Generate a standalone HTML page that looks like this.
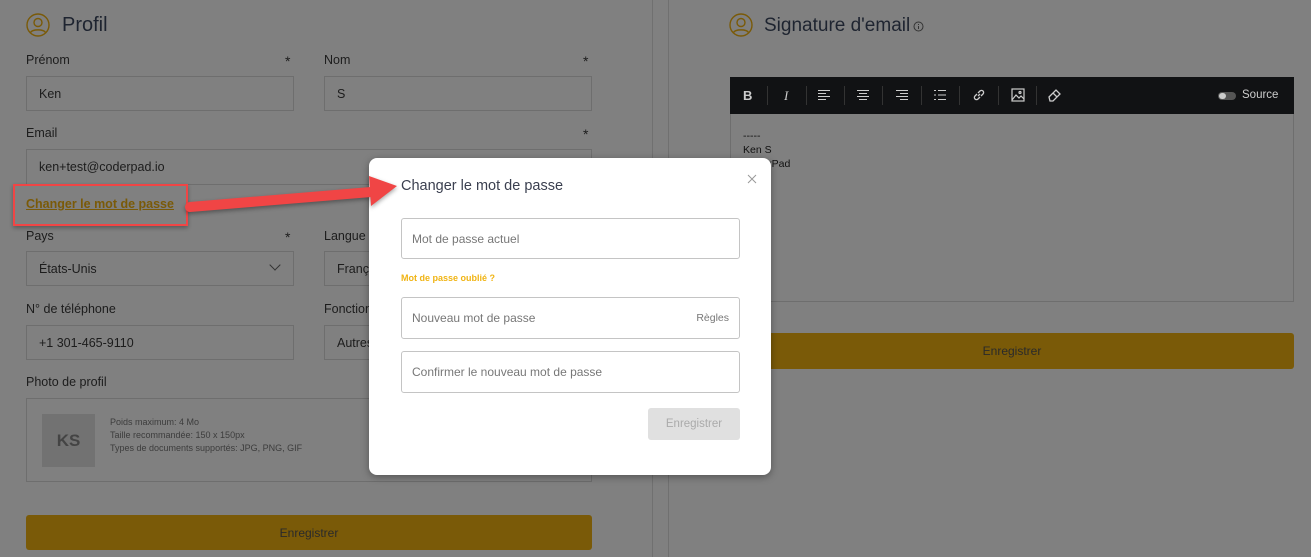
<!DOCTYPE html>
<html style="background:#808080"><head><meta charset="utf-8"><style>
*{box-sizing:border-box;margin:0;padding:0}
body{width:1311px;height:557px;overflow:hidden;background:#808080;font-family:"Liberation Sans",sans-serif;position:relative;color:#1c1c1c}
.a{position:absolute}
.lbl{position:absolute;font-size:12.5px;color:#1c1c1c}
.inp{position:absolute;border:1px solid #6e6e6e;font-size:12.5px;color:#1c1c1c;padding-left:12px;display:flex;align-items:center}
.star{position:absolute;font-size:14px}
.btn{position:absolute;background:#7a5a08;border-radius:3px;display:flex;align-items:center;justify-content:center;font-size:12px;color:#2a2a2a}
.minp{position:absolute;left:401px;width:339px;border:1px solid #c4c4c4;border-radius:3px;font-size:12px;color:#777;padding-left:10px;display:flex;align-items:center}
.tb{position:absolute;top:88px;color:#ccc;font-size:13px}
.sep{position:absolute;top:86px;width:1px;height:19px;background:#333}
</style></head><body>
<div class="a" style="left:652px;top:0;width:1px;height:557px;background:#707070"></div>
<div class="a" style="left:668px;top:0;width:1px;height:557px;background:#707070"></div>

<svg class="a" style="left:26px;top:13px" width="24" height="24" viewBox="0 0 24 24" fill="none" stroke="#7a5a08" stroke-width="1.4"><circle cx="12" cy="12" r="11"/><circle cx="12" cy="9.5" r="4"/><path d="M4.5 19.5c2-3.5 13-3.5 15 0"/></svg>
<div class="a" style="left:62px;top:14px;font-size:20px;color:#1e2430">Profil</div>

<div class="lbl" style="left:26px;top:53px">Prénom</div><div class="star" style="left:285px;top:53px">*</div>
<div class="lbl" style="left:324px;top:53px">Nom</div><div class="star" style="left:583px;top:53px">*</div>
<div class="inp" style="left:26px;top:76px;width:268px;height:35px">Ken</div>
<div class="inp" style="left:324px;top:76px;width:268px;height:35px">S</div>
<div class="lbl" style="left:26px;top:126px">Email</div><div class="star" style="left:583px;top:126px">*</div>
<div class="inp" style="left:26px;top:149px;width:566px;height:36px">ken+test@coderpad.io</div>
<div class="a" style="left:26px;top:197px;font-size:12.5px;font-weight:bold;color:#7a5a08;text-decoration:underline">Changer le mot de passe</div>
<div class="a" style="left:13px;top:184px;width:175px;height:42px;border:2px solid #f04545;box-shadow:0 2px 4px rgba(0,0,0,.3)"></div>
<div class="lbl" style="left:26px;top:229px">Pays</div><div class="star" style="left:285px;top:229px">*</div>
<div class="lbl" style="left:324px;top:229px">Langue</div>
<div class="inp" style="left:26px;top:251px;width:268px;height:35px">États-Unis<span style="position:absolute;right:14px;top:9px;width:8px;height:8px;border-right:1.5px solid #333;border-bottom:1.5px solid #333;transform:rotate(45deg)"></span></div>
<div class="inp" style="left:324px;top:251px;width:268px;height:35px">Français</div>
<div class="lbl" style="left:26px;top:302px">N° de téléphone</div>
<div class="lbl" style="left:324px;top:302px">Fonction</div>
<div class="inp" style="left:26px;top:325px;width:268px;height:35px">+1 301-465-9110</div>
<div class="inp" style="left:324px;top:325px;width:268px;height:35px">Autres</div>
<div class="lbl" style="left:26px;top:375px">Photo de profil</div>
<div class="a" style="left:26px;top:398px;width:566px;height:84px;border:1px solid #6e6e6e"></div>
<div class="a" style="left:42px;top:414px;width:53px;height:53px;background:#727272;display:flex;align-items:center;justify-content:center;font-weight:bold;font-size:17px;color:#444">KS</div>
<div class="a" style="left:110px;top:416px;font-size:9px;line-height:12.8px;color:#3c3c3c">Poids maximum: 4 Mo<br>Taille recommandée: 150 x 150px<br>Types de documents supportés: JPG, PNG, GIF</div>
<div class="btn" style="left:26px;top:515px;width:566px;height:35px">Enregistrer</div>

<svg class="a" style="left:729px;top:13px" width="24" height="24" viewBox="0 0 24 24" fill="none" stroke="#7a5a08" stroke-width="1.4"><circle cx="12" cy="12" r="11"/><circle cx="12" cy="9.5" r="4"/><path d="M4.5 19.5c2-3.5 13-3.5 15 0"/></svg>
<div class="a" style="left:764px;top:15px;font-size:19px;color:#1e2430">Signature d'email</div>
<svg class="a" style="left:913px;top:21px" width="11" height="11" viewBox="0 0 11 11" fill="none" stroke="#333"><circle cx="5.5" cy="5.5" r="4.5"/><path d="M5.5 5v3M5.5 3v1"/></svg>
<div class="a" style="left:730px;top:77px;width:564px;height:225px;border:1px solid #6e6e6e"></div>
<div class="a" style="left:730px;top:77px;width:564px;height:37px;background:#111214"></div>
<div class="tb" style="left:743px;font-weight:bold">B</div><div class="sep" style="left:767px"></div>
<div class="tb" style="left:784px;font-style:italic;font-family:'Liberation Serif',serif">I</div><div class="sep" style="left:806px"></div>
<svg class="a" style="left:818px;top:89px" width="12" height="12" stroke="#ccc"><path d="M0 1.5h12M0 4.5h8M0 7.5h12M0 10.5h8"/></svg><div class="sep" style="left:844px"></div>
<svg class="a" style="left:857px;top:89px" width="12" height="12" stroke="#ccc"><path d="M0 1.5h12M2 4.5h8M0 7.5h12M2 10.5h8"/></svg><div class="sep" style="left:882px"></div>
<svg class="a" style="left:896px;top:89px" width="12" height="12" stroke="#ccc"><path d="M0 1.5h12M4 4.5h8M0 7.5h12M4 10.5h8"/></svg><div class="sep" style="left:921px"></div>
<svg class="a" style="left:934px;top:89px" width="12" height="12" stroke="#ccc"><path d="M0 1.5h2M4 1.5h8M0 6h2M4 6h8M0 10.5h2M4 10.5h8"/></svg><div class="sep" style="left:959px"></div>
<svg class="a" style="left:972px;top:88px" width="14" height="14" fill="none" stroke="#ccc" stroke-width="1.3"><path d="M6 8l2-2M5 6L3 8a2 2 0 003 3l2-2M9 8l2-2a2 2 0 00-3-3L6 5"/></svg><div class="sep" style="left:998px"></div>
<svg class="a" style="left:1011px;top:88px" width="14" height="14" fill="none" stroke="#ccc" stroke-width="1.2"><rect x="1" y="1" width="12" height="12"/><path d="M1 12l4-5 3 3 2-2 3 3"/><circle cx="9" cy="4.5" r="1"/></svg><div class="sep" style="left:1036px"></div>
<svg class="a" style="left:1047px;top:88px" width="16" height="14" fill="none" stroke="#ccc" stroke-width="1.3"><path d="M2 9l7-7 4 4-7 7H3zM6 5l4 4"/></svg>
<div class="a" style="left:1218px;top:92px;width:18px;height:8px;border-radius:4px;background:#555"></div>
<div class="a" style="left:1219px;top:93px;width:7px;height:6px;border-radius:3px;background:#ccc"></div>
<div class="a" style="left:1242px;top:89px;font-size:11.5px;color:#ccc">Source</div>
<div class="a" style="left:743px;top:129px;font-size:10.5px;line-height:14px;color:#111">-----<br>Ken S<br>CoderPad</div>
<div class="btn" style="left:730px;top:333px;width:564px;height:36px">Enregistrer</div>

<div class="a" style="left:369px;top:158px;width:402px;height:317px;background:#fff;border-radius:8px;box-shadow:0 2px 8px rgba(0,0,0,.35)"></div>
<div class="a" style="left:401px;top:178px;font-size:14.5px;color:#3a3f4f">Changer le mot de passe</div>
<svg class="a" style="left:747px;top:174px" width="10" height="10" stroke="#999"><path d="M1 1l8 8M9 1l-8 8"/></svg>
<div class="minp" style="top:218px;height:41px">Mot de passe actuel</div>
<div class="a" style="left:401px;top:273px;font-size:9px;font-weight:bold;color:#f0b414">Mot de passe oublié ?</div>
<div class="minp" style="top:297px;height:42px">Nouveau mot de passe<span style="position:absolute;right:10px;font-size:10.5px">Règles</span></div>
<div class="minp" style="top:351px;height:42px">Confirmer le nouveau mot de passe</div>
<div class="a" style="left:648px;top:408px;width:92px;height:32px;background:#e0e0e0;border-radius:3px;display:flex;align-items:center;justify-content:center;font-size:11.5px;color:#aaa">Enregistrer</div>

<svg class="a" style="left:0;top:0;overflow:visible" width="1" height="1"><g style="filter:drop-shadow(0 2px 2px rgba(0,0,0,.35))"><path d="M190 207L371 192" stroke="#f04545" stroke-width="10" stroke-linecap="round"/><path d="M369 176L397 186L371 206Z" fill="#f04545"/></g></svg>
</body></html>
